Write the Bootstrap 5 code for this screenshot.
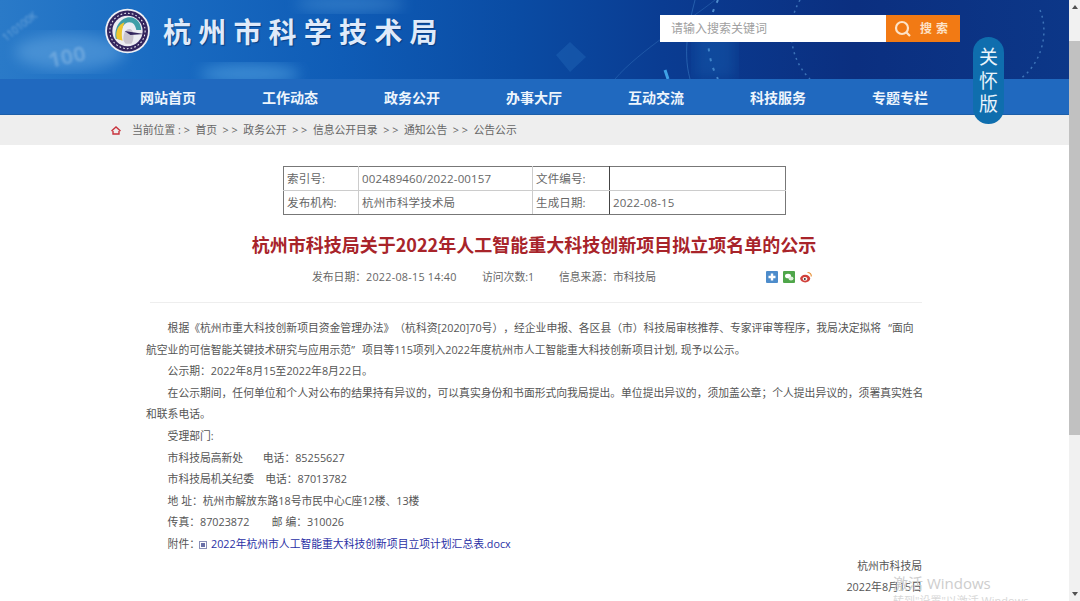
<!DOCTYPE html>
<html lang="zh-CN">
<head>
  <meta charset="UTF-8">
  <meta name="viewport" content="width=device-width, initial-scale=1.0">
  <title>杭州市科学技术局</title>
  <link href="https://cdn.jsdelivr.net/npm/bootstrap@5.3.0/dist/css/bootstrap.min.css" rel="stylesheet">
  <style>
    html, body { height: 601px; overflow: hidden; }
    body { font-family: "Open Sans", "Noto Sans CJK SC", sans-serif; font-size: 10.8px; color: #555; background: #fff; text-spacing-trim: space-all; }
    .page-shell { height: 601px; }
    .page-main { width: 1069px; position: relative; overflow: hidden; }

    /* 滚动条 */
    .fake-scroll { width: 11px; background: #f1f1f1; }
    .fake-scroll i { display: block; width: 0; height: 0; margin: 5px auto; border-left: 3px solid transparent; border-right: 3px solid transparent; }
    .fake-scroll .up { border-bottom: 4px solid #505050; }
    .fake-scroll .down { border-top: 4px solid #505050; }
    .fake-thumb { height: 394px; margin-top: 27px; background: #c1c1c1; }

    /* 顶部 */
    .top-band { height: 79px; position: relative; overflow: hidden; background: linear-gradient(90deg, #2a7ac8 0%, #1a6cc2 14%, #0f5cb6 32%, #0a4ca4 48%, #0a3c92 62%, #0b2f80 80%, #0c3788 100%); }
    .top-art { position: absolute; left: 0; top: 0; }
    .top-inner { position: relative; height: 62px; padding-left: 105px; }
    .site-name { margin-left: 13px; font-size: 28px; line-height: 1; font-weight: 700; letter-spacing: 7.2px; color: #dfeafa; font-family: "Noto Sans CJK SC", sans-serif; text-shadow: 1px 1px 1px #0a3c80; }
    .search-box { position: absolute; left: 660px; top: 15px; width: 300px; height: 27px; }
    .search-field { width: 226px; background: #fff; color: #a0a0a0; font-size: 12px; line-height: 27px; padding-left: 11px; }
    .search-btn { width: 74px; background: #f27a14; color: #fde3c8; font-size: 12px; font-weight: 700; letter-spacing: 4px; }

    /* 关怀版 */
    .care-pill { position: absolute; left: 973px; top: 37px; width: 31px; height: 87px; border-radius: 16px; background: #0f6eae; color: #e9f4fb; font-size: 19px; line-height: 23.5px; text-align: center; padding-top: 9px; }

    .main-nav { height: 36px; padding-left: 140px; gap: 66px; background: #2069bf; border-bottom: 1px solid #1c5ea9; }
    .main-nav a { color: #eef5fc; font-size: 14px; font-weight: 700; text-decoration: none; width: 56px; white-space: nowrap; line-height: 37px; }

    .crumb-bar { height: 30px; background: #eeeeee; padding-left: 111px; color: #666; }
    .crumb-bar svg { margin-right: 11px; }
    .crumb-bar span { margin-right: 5.6px; }

    /* 信息表 */
    .info-grid { width: 502px; height: 49px; margin: 21px 0 0 283px; table-layout: fixed; font-size: 11.5px; }
    .info-grid td { padding: 0 3px; height: 24px; vertical-align: middle; border: 1px solid #ccc; color: #666; line-height: 1; letter-spacing: .15px; }
    .info-grid tr:first-child td { border-top: 1px solid #777; }
    .info-grid tr:last-child td { border-bottom: 1px solid #777; }
    .info-grid td:first-child { border-left: 1px solid #777; }
    .info-grid td:last-child { border-right: 1px solid #777; }
    .info-grid td.dark-edge { border-right: 1px solid #444; }

    .doc-title { margin: 19px 0 0; height: 20px; font-size: 18px; line-height: 20px; font-weight: 700; color: #a8242a; text-align: center; font-family: "Noto Sans CJK SC", sans-serif; width: 1068px; }
    .doc-meta { height: 20px; margin-top: 13px; padding-left: 312px; color: #666; }
    .doc-meta svg { display: block; }
    .stamp-num { letter-spacing: .25px; }
    .doc-rule { width: 772px; height: 1px; margin: 15px 0 0 150px; background: #eeeeee; }

    .doc-body { width: 778px; margin: 14px 0 0 146px; line-height: 2; color: #555; }
    .doc-body p { margin: 0; text-indent: 2em; }
    .doc-body a { color: #2a2fa5; text-decoration: none; }
    .wide-quote { display: inline-block; width: 1em; text-indent: 0; }
    .quote-open { text-align: right; }
    .quote-close { text-align: left; }
    .file-ico { margin: 0 4px 0 -1px; }
    .sign-off { text-align: right; padding-right: 2px; }

    .win-mark { position: absolute; left: 893px; top: 576px; color: #cdcdcd; font-size: 15px; line-height: 1; white-space: nowrap; }
    .win-sub { position: absolute; left: 893px; top: 595px; color: #d8d8d8; font-size: 11px; line-height: 1; white-space: nowrap; }
  </style>
</head>
<body>
  <div class="page-shell d-flex">
    <div class="page-main">

      <!-- 顶部 -->
      <div class="top-band">
        <svg class="top-art" width="1069" height="79" viewBox="0 0 1069 79" fill="none">
          <defs><filter id="soft"><feGaussianBlur stdDeviation="7"/></filter><filter id="soft2"><feGaussianBlur stdDeviation="1"/></filter></defs>
          <ellipse cx="70" cy="52" rx="55" ry="18" fill="#7ab8ea" opacity=".4" filter="url(#soft)"/>
          <ellipse cx="250" cy="74" rx="50" ry="10" fill="#5aa8e4" opacity=".55" filter="url(#soft)"/>
          <ellipse cx="350" cy="4" rx="55" ry="8" fill="#6db0e4" opacity=".35" filter="url(#soft)"/>
          <text x="6" y="42" fill="#b5d5f0" opacity=".5" font-size="10" transform="rotate(-38 6 42)" filter="url(#soft2)">110100K</text>
          <text x="50" y="68" fill="#bcd9f2" opacity=".3" font-size="22" font-weight="700" transform="rotate(-12 50 68)" filter="url(#soft2)">100</text>
          <path d="M615 79 C640 50 690 20 715 0" stroke="#3b7cc4" opacity=".4"/>
          <path d="M690 79 C682 50 690 20 695 0" stroke="#4d96da" opacity=".4"/>
          <path d="M718 0 C705 25 705 55 718 79" stroke="#6db2ea" stroke-dasharray="3 7" stroke-width="2" opacity=".7"/>
          <path d="M800 0 C785 25 790 60 810 79" stroke="#6db2ea" stroke-dasharray="2 4" stroke-width="1.5" opacity=".5"/>
          <path d="M1040 10 C1050 35 1040 65 1020 79" stroke="#6db2ea" stroke-dasharray="2 4" stroke-width="1.5" opacity=".5"/>
          <path d="M665 70 L668 79" stroke="#3fa2e6" stroke-width="3"/>
          <rect x="695" y="30" width="40" height="49" fill="#1e6fc0" opacity=".3" filter="url(#soft)"/>
          <path d="M556 55 L570 42 L586 57 L570 72 Z" fill="#2f78c4" opacity=".3"/>
        </svg>
        <div class="top-inner d-flex align-items-center">
          <svg width="45" height="46" viewBox="0 0 46 46" class="flex-shrink-0">
            <circle cx="23" cy="23" r="22.8" fill="#eef0f6"/>
            <circle cx="23" cy="23" r="21" fill="#33255e"/>
            <circle cx="23" cy="23" r="21" fill="none" stroke="#f3f3f8" stroke-width="1.2" stroke-dasharray="2 2.5" transform="scale(.86) translate(3.7 3.7)"/>
            <circle cx="23" cy="23" r="15.5" fill="#ececf2"/>
            <path d="M11 31 C9 18 17 9 25 9 C33 9 37 16 37 22 L32 22 C31 17 29 14 25 14 C19 14 15 21 17 32 Z" fill="#3f9ea8"/>
            <path d="M12 31 C10 23 14 16 20 14 C18 19 16 25 18 33 Z" fill="#eec52d"/>
            <path d="M19 33 C18 26 21 20 26 21 C30 23 30 32 27 36 L21 36 Z" fill="#c9c4cf"/>
            <path d="M20 23 L40 26 L26 27 Z" fill="#33255e"/>
          </svg>
          <div class="site-name">杭州市科学技术局</div>
        </div>
        <div class="search-box d-flex">
          <div class="search-field">请输入搜索关键词</div>
          <div class="search-btn d-flex align-items-center justify-content-center">
            <svg width="18" height="18" viewBox="0 0 18 18" fill="none" stroke="#fde3c8" stroke-width="2.2" class="me-2"><circle cx="8" cy="8" r="6"/><path d="M12.5 12.5 L16 16"/></svg>
            <span>搜索</span>
          </div>
        </div>
      </div>

      <!-- 导航 -->
      <nav class="main-nav d-flex">
        <a href="#">网站首页</a>
        <a href="#">工作动态</a>
        <a href="#">政务公开</a>
        <a href="#">办事大厅</a>
        <a href="#">互动交流</a>
        <a href="#">科技服务</a>
        <a href="#">专题专栏</a>
      </nav>

      <!-- 当前位置 -->
      <div class="crumb-bar d-flex align-items-center">
        <svg width="10" height="9" viewBox="0 0 10 9" fill="none" stroke="#c8323c" stroke-width="1.4"><path d="M0.5 5 L5 1 L9.5 5"/><path d="M2 5 V8 H8 V5"/></svg>
        <span>当前位置 : &gt;</span>
        <span>首页</span>
        <span>&gt; &gt;</span>
        <span>政务公开</span>
        <span>&gt; &gt;</span>
        <span>信息公开目录</span>
        <span>&gt; &gt;</span>
        <span>通知公告</span>
        <span>&gt; &gt;</span>
        <span>公告公示</span>
      </div>

      <!-- 信息表 -->
      <table class="info-grid">
        <colgroup><col style="width:75px"><col style="width:174px"><col style="width:77px"><col style="width:176px"></colgroup>
        <tr>
          <td>索引号:</td>
          <td>002489460/2022-00157</td>
          <td class="dark-edge">文件编号:</td>
          <td></td>
        </tr>
        <tr>
          <td>发布机构:</td>
          <td>杭州市科学技术局</td>
          <td class="dark-edge">生成日期:</td>
          <td>2022-08-15</td>
        </tr>
      </table>

      <h1 class="doc-title">杭州市科技局关于2022年人工智能重大科技创新项目拟立项名单的公示</h1>

      <div class="doc-meta d-flex align-items-center">
        <span style="width:170px">发布日期&#xFF1A;<span class="stamp-num">2022-08-15 14:40</span></span>
        <span style="width:77px">访问次数:1</span>
        <span style="width:207px">信息来源&#xFF1A;市科技局</span>
        <div class="d-flex" style="gap:5px">
          <svg width="12" height="12" viewBox="0 0 12 12"><rect width="12" height="12" rx="1" fill="#4d8ccb"/><path d="M6 2.5 V9.5 M2.5 6 H9.5" stroke="#fff" stroke-width="2.4"/></svg>
          <svg width="12" height="12" viewBox="0 0 12 12"><rect width="12" height="12" rx="1" fill="#4fa64a"/><ellipse cx="5" cy="5" rx="3" ry="2.3" fill="#fff"/><ellipse cx="8" cy="7.4" rx="2.5" ry="2" fill="#dff0dc"/></svg>
          <svg width="12" height="12" viewBox="0 0 12 12"><ellipse cx="5.2" cy="7.6" rx="5" ry="3.8" fill="#d0403a"/><ellipse cx="5" cy="7.8" rx="2.4" ry="1.9" fill="#fff"/><circle cx="4.8" cy="7.9" r="1" fill="#333"/><path d="M7.5 1.5 C10 1.5 11.5 3 11.2 5.5" stroke="#e8923a" stroke-width="1.2" fill="none"/></svg>
        </div>
      </div>
      <div class="doc-rule"></div>

      <!-- 正文 -->
      <div class="doc-body">
        <p>根据《杭州市重大科技创新项目资金管理办法》&#xFF08;杭科资[2020]70号&#xFF09;&#xFF0C;经企业申报、各区县&#xFF08;市&#xFF09;科技局审核推荐、专家评审等程序&#xFF0C;我局决定拟将<span class="wide-quote quote-open">“</span>面向航空业的可信智能关键技术研究与应用示范<span class="wide-quote quote-close">”</span>项目等115项列入2022年度杭州市人工智能重大科技创新项目计划, 现予以公示。</p>
        <p>公示期&#xFF1A;2022年8月15至2022年8月22日。</p>
        <p>在公示期间&#xFF0C;任何单位和个人对公布的结果持有异议的&#xFF0C;可以真实身份和书面形式向我局提出。单位提出异议的&#xFF0C;须加盖公章&#xFF1B;个人提出异议的&#xFF0C;须署真实姓名和联系电话。</p>
        <p>受理部门:</p>
        <p>市科技局高新处&nbsp;&nbsp;&nbsp;&nbsp;&nbsp;&nbsp;&nbsp;电话&#xFF1A;85255627</p>
        <p>市科技局机关纪委&nbsp;&nbsp;&nbsp;&nbsp;电话&#xFF1A;87013782</p>
        <p>地 址&#xFF1A;杭州市解放东路18号市民中心C座12楼、13楼</p>
        <p>传真&#xFF1A;87023872&nbsp;&nbsp;&nbsp;&nbsp;&nbsp;&nbsp;&nbsp;&nbsp;邮 编&#xFF1A;310026</p>
        <p>附件&#xFF1A;<svg class="file-ico" width="8" height="8" viewBox="0 0 8 8"><rect x=".5" y=".5" width="7" height="7" fill="none" stroke="#8a8fb8"/><rect x="2" y="2" width="4" height="4" fill="#6a70a8"/></svg><a href="#">2022年杭州市人工智能重大科技创新项目立项计划汇总表.docx</a></p>
        <div class="sign-off">杭州市科技局<br>2022年8月15日</div>
      </div>

      <!-- 覆盖层 -->
      <div class="care-pill">关<br>怀<br>版</div>
      <div class="win-mark">激活 Windows</div>
      <div class="win-sub">转到"设置"以激活 Windows。</div>
    </div>

    <div class="fake-scroll d-flex flex-column">
      <i class="up"></i>
      <div class="fake-thumb"></div>
      <i class="down mt-auto"></i>
    </div>
  </div>

  <script src="https://cdn.jsdelivr.net/npm/bootstrap@5.3.0/dist/js/bootstrap.bundle.min.js"></script>
</body>
</html>
